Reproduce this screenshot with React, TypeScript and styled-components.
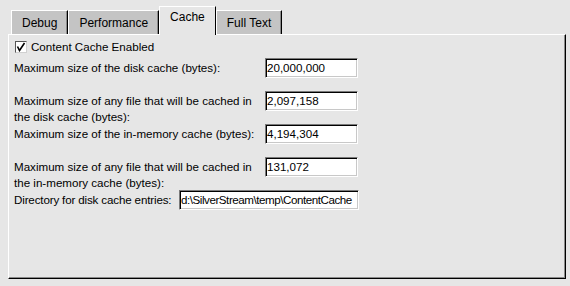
import React from 'react'
import styled, { createGlobalStyle } from 'styled-components'

const GlobalStyle = createGlobalStyle`
  html, body {
    margin: 0;
    padding: 0;
    background: #e6e6e6;
    font-family: "Liberation Sans", Arial, sans-serif;
    font-size: 11.6px;
    color: #000;
  }
`

const Screen = styled.div`
  width: 570px;
  height: 286px;
  box-sizing: border-box;
  padding: 6px 0 0 8px;
  background: #e6e6e6;
`

const TabStrip = styled.div`
  display: flex;
  align-items: flex-end;
  height: 28px;
  padding-left: 3px;
  position: relative;
  z-index: 1;
`

const Tab = styled.div<{ active?: boolean }>`
  box-sizing: border-box;
  height: ${(p) => (p.active ? '29px' : '24px')};
  margin-bottom: ${(p) => (p.active ? '-1px' : '0')};
  padding: ${(p) => (p.active ? '3px 10px 0 10px' : '5px 10px 0 10px')};
  background: ${(p) => (p.active ? '#e6e6e6' : '#c4c4c4')};
  border-top: 1px solid #fff;
  border-left: 1px solid #fff;
  border-right: 1px solid #000;
  box-shadow: ${(p) => (p.active ? 'none' : 'inset -1px 0 0 #8a8a8a')};
  font-size: 12px;
  line-height: 14px;
  white-space: nowrap;
`

const Panel = styled.div`
  box-sizing: border-box;
  width: 558px;
  height: 245px;
  border-top: 1px solid #fff;
  border-left: 1px solid #fff;
  border-right: 1px solid #000;
  border-bottom: 1px solid #000;
  box-shadow: inset -1px -1px 0 #8a8a8a;
  padding: 5px 0 0 5px;
`

const CheckRow = styled.label`
  display: flex;
  align-items: center;
  gap: 4px;
  height: 13px;
  margin: 0 0 5px 1px;
  line-height: 13px;
`

const CheckBox = styled.span`
  box-sizing: border-box;
  width: 12px;
  height: 12px;
  background: #fff;
  border-top: 1px solid #555;
  border-left: 1px solid #555;
  border-right: 1px solid #d0d0d0;
  border-bottom: 1px solid #d0d0d0;
  display: flex;
  align-items: center;
  justify-content: center;
`

const Row = styled.div`
  display: flex;
  align-items: flex-start;
  height: 33px;
`

const FieldLabel = styled.div<{ width: number; tight?: boolean }>`
  width: ${(p) => p.width}px;
  flex: none;
  padding-top: 2px;
  line-height: 16px;
  letter-spacing: ${(p) => (p.tight ? '-0.15px' : '0')};
  white-space: nowrap;
`

const TextBox = styled.div<{ width: number; tight?: boolean }>`
  box-sizing: border-box;
  width: ${(p) => p.width}px;
  height: 20px;
  background: #fff;
  border-top: 1px solid #7a7a7a;
  border-left: 1px solid #7a7a7a;
  border-right: 1px solid #fff;
  border-bottom: 1px solid #fff;
  box-shadow: inset 1px 1px 0 #000, inset -1px -1px 0 #c8c8c8;
  padding: 0 0 0 1px;
  line-height: 18px;
  letter-spacing: ${(p) => (p.tight ? '-0.45px' : '0')};
  white-space: nowrap;
  overflow: hidden;
`

const fields = [
  { label: ['Maximum size of the disk cache (bytes):'], value: '20,000,000' },
  { label: ['Maximum size of any file that will be cached in', 'the disk cache (bytes):'], value: '2,097,158' },
  { label: ['Maximum size of the in-memory cache (bytes):'], value: '4,194,304' },
  { label: ['Maximum size of any file that will be cached in', 'the in-memory cache (bytes):'], value: '131,072' },
]

export default function App() {
  return (
    <Screen>
      <GlobalStyle />
      <TabStrip>
        <Tab>Debug</Tab>
        <Tab>Performance</Tab>
        <Tab active>Cache</Tab>
        <Tab>Full Text</Tab>
      </TabStrip>
      <Panel>
        <CheckRow>
          <CheckBox>
            <svg width="10" height="10" viewBox="0 0 10 10">
              <path d="M1.5 4.5 L3.5 8.5 L8.5 1" fill="none" stroke="#000" strokeWidth="1.6" />
            </svg>
          </CheckBox>
          Content Cache Enabled
        </CheckRow>
        {fields.map((f) => (
          <Row key={f.value}>
            <FieldLabel width={251}>
              {f.label.map((l) => (
                <div key={l}>{l}</div>
              ))}
            </FieldLabel>
            <TextBox width={93}>{f.value}</TextBox>
          </Row>
        ))}
        <Row>
          <FieldLabel width={165} tight>Directory for disk cache entries:</FieldLabel>
          <TextBox width={180} tight>d:\SilverStream\temp\ContentCache</TextBox>
        </Row>
      </Panel>
    </Screen>
  )
}
